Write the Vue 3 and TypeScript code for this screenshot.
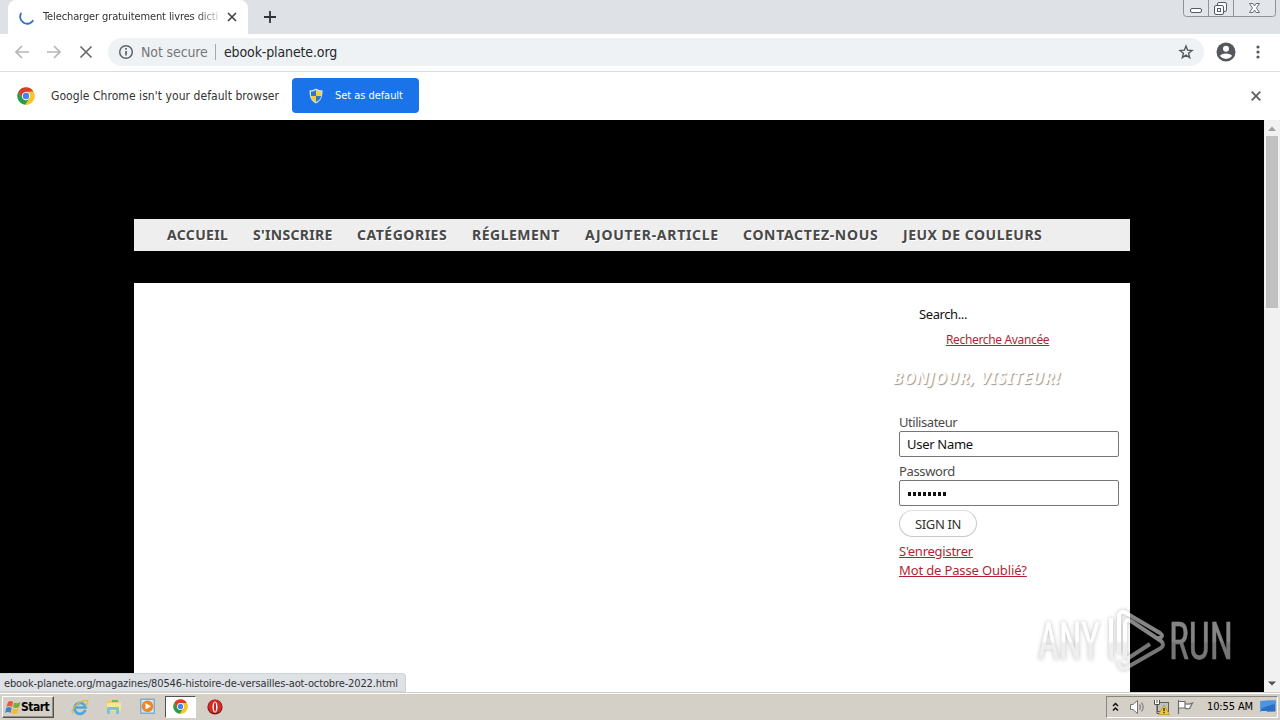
<script setup lang="ts">
import { ref } from 'vue'

interface NavItem {
  label: string
  width: number
  spacing: number
}

const navItems: NavItem[] = [
  { label: 'Accueil', width: 86, spacing: 0.35 },
  { label: "S'inscrire", width: 104, spacing: 0.3 },
  { label: 'Catégories', width: 115, spacing: 0.52 },
  { label: 'Réglement', width: 113, spacing: 0.5 },
  { label: 'Ajouter-article', width: 158, spacing: 0.7 },
  { label: 'Contactez-nous', width: 160, spacing: 0.67 },
  { label: 'Jeux de couleurs', width: 164, spacing: 0.5 },
]

const userName = ref('User Name')
const bullets = 8
</script>

<template>
  <div class="screen">
    <svg class="defs" width="0" height="0" aria-hidden="true">
      <symbol id="chrome" viewBox="0 0 48 48">
        <circle cx="24" cy="24" r="23" fill="#f9c52a" />
        <path d="M4 12.5A23 23 0 0 1 44 12.5H24L14 30Z" fill="#dc3c2e" />
        <path d="M4 12.5A23 23 0 0 0 22 47L34 29.5L14 30Z" fill="#279b50" />
        <path d="M44 12.5A23 23 0 0 1 22 47L34 30L33 12.5Z" fill="#f9c52a" />
        <circle cx="24" cy="24" r="11" fill="#fff" />
        <circle cx="24" cy="24" r="8.5" fill="#4285e8" />
      </symbol>
    </svg>

    <header class="tabstrip">
      <div class="tab">
        <svg class="spinner" width="16" height="16" viewBox="0 0 16 16"><path d="M2.2 4A7 7 0 0 0 14.300 11.300" fill="none" stroke="#2e6fc9" stroke-width="1.8" /></svg>
        <span class="tab-title">Telecharger gratuitement livres dicti</span>
        <svg class="tab-x" width="10" height="10" viewBox="0 0 10 10"><path d="M1 1L9 9M9 1L1 9" stroke="#3c4043" stroke-width="1.6" /></svg>
      </div>
      <svg class="plus" width="12" height="12" viewBox="0 0 12 12"><path d="M6 0V12M0 6H12" stroke="#303338" stroke-width="1.8" /></svg>
      <svg class="window-buttons" width="94" height="18" viewBox="0 0 94 18">
        <path d="M.5 0V13.5Q.5 16.5 3.5 16.5H89.5Q92.5 16.5 92.5 13.5V0M25.5 0V16M50.5 0V16" fill="#e2e5e9" stroke="#8d929b" />
        <rect x="7.500" y="8.500" width="11" height="4" rx="1.500" fill="#fff" stroke="#555b66" />
        <rect x="34.500" y="2.500" width="9" height="9" rx="1.500" fill="#fff" stroke="#555b66" />
        <rect x="31.500" y="5.500" width="9" height="9" rx="1.500" fill="#fff" stroke="#555b66" />
        <rect x="34.500" y="8.500" width="3" height="3" fill="#fff" stroke="#555b66" />
        <path d="M66.500 3.500H70L71.500 6L73 3.500H76.500L73.500 8L76.500 12.500H73L71.500 10L70 12.500H66.500L69.500 8Z" fill="#fff" stroke="#6b7079" />
      </svg>
    </header>

    <div class="toolbar">
      <svg class="nav-icons" width="84" height="16" viewBox="0 0 84 16" fill="none">
        <path d="M15 8H2M8 2L2 8L8 14M33 8H46M40 2L46 8L40 14" stroke="#b4b6b9" stroke-width="1.700" />
        <path d="M66.500 2.500L77.500 13.500M77.500 2.500L66.500 13.500" stroke="#66696d" stroke-width="1.700" />
      </svg>
      <div class="omnibox">
        <svg width="16" height="16" viewBox="0 0 16 16"><circle cx="8" cy="8" r="6.300" fill="none" stroke="#5f6368" stroke-width="1.500" /><path d="M8 7V11.500M8 4V5.700" stroke="#5f6368" stroke-width="1.700" /></svg>
        <span class="not-secure">Not secure</span>
        <i class="divider"></i>
        <span class="url">ebook-planete.org</span>
        <svg class="star" width="16" height="16" viewBox="0 0 16 16"><path d="M8 2L9.600 6.200L14 6.500L10.600 9.300L11.700 13.600L8 11.200L4.300 13.600L5.400 9.300L2 6.500L6.400 6.200Z" fill="none" stroke="#54585d" stroke-width="1.400" /></svg>
      </div>
      <svg class="avatar" width="20" height="20" viewBox="0 0 20 20"><circle cx="10" cy="10" r="9.500" fill="#54585d" /><circle cx="10" cy="6.700" r="3" fill="#fff" /><path d="M3.900 14C5 10.500 15 10.500 16.100 14Q13.700 17 10 17T3.900 14Z" fill="#fff" /></svg>
      <svg class="kebab" width="4" height="14" viewBox="0 0 4 14" fill="#54585d"><circle cx="2" cy="2" r="1.600" /><circle cx="2" cy="7" r="1.600" /><circle cx="2" cy="12" r="1.600" /></svg>
    </div>

    <div class="infobar">
      <svg class="chrome-mark" width="18" height="18"><use href="#chrome" /></svg>
      <span class="default-text">Google Chrome isn't your default browser</span>
      <button class="set-default">
        <svg width="14" height="16" viewBox="0 0 14 16">
          <path d="M7 .5C9 2 11 2.300 13.500 2.200C13.600 9 12 13 7 15.500C2 13 .4 9 .5 2.200C3 2.300 5 2 7 .5Z" fill="#d5dfe6" />
          <path d="M7 2C5 3.300 4 3.500 2 3.500V8H7Z" fill="#3178c8" /><path d="M7 2C9 3.300 10 3.500 12 3.500V8H7Z" fill="#f5cf35" />
          <path d="M2 8H7V14C4 12.500 2.400 11 2 8Z" fill="#f5cf35" /><path d="M7 8H12C11.600 11 10 12.500 7 14Z" fill="#3178c8" />
        </svg>
        <span>Set as default</span>
      </button>
      <svg class="info-x" width="10" height="10" viewBox="0 0 10 10"><path d="M.7 .7L9.300 9.300M9.300 .7L.7 9.300" stroke="#5f6368" stroke-width="1.900" /></svg>
    </div>

    <div class="viewport">
      <main class="page">
        <nav class="menu">
          <a v-for="item in navItems" :key="item.label" :style="{ width: item.width + 'px', letterSpacing: item.spacing + 'px' }">{{ item.label }}</a>
        </nav>
        <section class="content">
          <aside class="sidebar">
            <div class="search">Search...</div>
            <a class="advanced">Recherche Avancée</a>
            <h2>Bonjour, Visiteur!</h2>
            <form class="login">
              <label>Utilisateur</label>
              <div class="field"><span class="username">{{ userName }}</span></div>
              <label class="second">Password</label>
              <div class="field"><span class="bullets"><i v-for="n in bullets" :key="n"></i></span></div>
              <button type="button" class="sign-in"><span>SIGN IN</span></button>
              <a class="register">S'enregistrer</a>
              <a class="forgot">Mot de Passe Oublié?</a>
            </form>
          </aside>
        </section>
      </main>
      <div class="scrollbar">
        <svg width="16" height="16" viewBox="0 0 16 16"><path d="M4 11L8 6.500L12 11Z" fill="#a0a0a0" /></svg>
        <div class="thumb"></div>
        <svg class="down" width="16" height="16" viewBox="0 0 16 16"><path d="M4 5.500H12L8 9.500Z" fill="#4f4f4f" /></svg>
      </div>
      <div class="status">ebook-planete.org/magazines/80546-histoire-de-versailles-aot-octobre-2022.html</div>
      <svg class="watermark" width="230" height="86" viewBox="0 0 230 86">
        <defs>
          <linearGradient id="fade" gradientUnits="userSpaceOnUse" x1="0" y1="8" x2="0" y2="70"><stop offset="0" stop-color="#fff" /><stop offset=".5" stop-color="#fff" /><stop offset=".54" stop-color="#e2e2e2" /><stop offset="1" stop-color="#e2e2e2" /></linearGradient>
        </defs>
        <g class="mark-shape">
          <text x="9" y="57" textLength="62" lengthAdjust="spacingAndGlyphs">ANY</text>
          <path d="M82 16V53Q82 56 85 57M90 51V13Q92 8 97 11L131 31Q135 34 131 36L128 36M96 56V22Q97 16 102 19L132 39Q136 43 132 46L97 66Q92 68 90 62V59M98 57L121 42" fill="none" stroke="url(#fade)" stroke-width="4" stroke-linejoin="round" />
          <text x="140" y="57" textLength="64" lengthAdjust="spacingAndGlyphs">RUN</text>
        </g>
      </svg>
    </div>

    <footer class="taskbar">
      <button class="start">
        <svg width="16" height="16" viewBox="0 0 16 16">
          <path d="M3 3Q6 1 8 3L7 8Q4 6 1.500 8Z" fill="#e85c2b" /><path d="M9 3.500Q12 5 15.500 3L14 8Q11 10 8 8Z" fill="#79ae3b" />
          <path d="M1.200 9Q4 7 6.700 9L5.500 14Q3 12 0 14Z" fill="#3d84cc" /><path d="M7.700 9.500Q11 11 14 9.500L12.500 14Q9 16 6.500 14Z" fill="#f5bd2b" />
        </svg>
        <span>Start</span>
      </button>
      <svg class="quick ie" width="18" height="18" viewBox="0 0 18 18">
        <path d="M14.300 12A5.500 5.500 0 1 1 14.500 9.500H5" fill="none" stroke="#48a9df" stroke-width="2.700" />
        <path d="M2 15.500C-2 12 10 1 16 2.500Q18 4 14.500 8" fill="none" stroke="#e6b83c" stroke-width="1.300" />
      </svg>
      <svg class="quick explorer" width="17" height="17" viewBox="0 0 17 17">
        <path d="M1 3H5L6 1.500H12V4H15V14H1Z" fill="#edcf69" /><path d="M2 5H16V13H2Z" fill="#f6e59b" />
        <path d="M2 16V10Q2 9 3 9H13Q14 9 14 10V16H11V12H5V16Z" fill="#81bde0" /><path d="M7 3H13" stroke="#56a96d" stroke-width="1.500" />
      </svg>
      <svg class="quick player" width="17" height="17" viewBox="0 0 17 17">
        <rect x="1" y=".5" width="15" height="15.500" fill="#7caed8" /><rect x="2.500" y="2" width="12" height="12.500" fill="#d8e8f3" />
        <circle cx="8.500" cy="8.300" r="5.800" fill="#ef8521" /><path d="M6.500 5L12 8.300L6.500 11.600Z" fill="#fff" />
      </svg>
      <div class="active-task"><svg width="15" height="15"><use href="#chrome" /></svg></div>
      <svg class="quick opera" width="16" height="16" viewBox="0 0 16 16">
        <circle cx="8" cy="8" r="7.600" fill="#7e1411" /><circle cx="8" cy="7.500" r="6.800" fill="#d22c26" /><ellipse cx="8" cy="8" rx="2.500" ry="5.500" fill="#fff" /><ellipse cx="8" cy="8" rx="1.100" ry="4.700" fill="#c42723" />
      </svg>
      <div class="tray">
        <svg class="chevrons" width="7" height="10" viewBox="0 0 7 10"><path d="M1 4L3.500 1.500L6 4M1 8.500L3.500 6L6 8.500" fill="none" stroke="#111" stroke-width="1.500" /></svg>
        <svg class="speaker" width="18" height="16" viewBox="0 0 18 16"><path d="M1.500 5.500H4L8.500 1.500V14.500L4 10.500H1.500Z" fill="#fff" stroke="#77746f" /><path d="M10.500 5.500Q12.500 8 10.500 10.500M12.500 3.500Q16 8 12.500 12.500" fill="none" stroke="#8b8883" stroke-width="1.300" /></svg>
        <svg class="network" width="17" height="16" viewBox="0 0 17 16"><rect x="4.500" y="3.500" width="11" height="9" fill="#bfc2c3" stroke="#626262" /><path d="M1 1H7V6H1Z" fill="#fff" /><path d="M1.500 1V5.500H6.500V1M4 1V4M4 6V14.500H8" fill="none" stroke="#4f4f4f" /><path d="M11 6L16.500 15.500H5.500Z" fill="#f4cc28" stroke="#a58819" stroke-width=".6" /><path d="M11 9V12.200M11 13V14.200" stroke="#222" stroke-width="1.300" /></svg>
        <svg class="flag" width="17" height="16" viewBox="0 0 17 16"><path d="M1.500 1V15M2 2.500H8V9H2M8 4.500Q11 6 15.500 4L12.500 9.500Q10 10.500 8 9Z" fill="#fff" stroke="#716f6b" stroke-width="1.200" /></svg>
        <span class="clock">10:55 AM</span>
        <svg class="desktop" width="16" height="14" viewBox="0 0 16 14"><path d="M.5 1L15.500 .5V11.500L.5 12Z" fill="#2b6fc5" /><path d="M.5 1L15.500 .5V4Q8 5 .5 9Z" fill="#4b94de" /><path d="M1 11H7V13H1Z" fill="#b6d3e7" /></svg>
      </div>
    </footer>
  </div>
</template>

<style>
body { margin: 0; overflow: hidden; }
</style>

<style scoped>
* { box-sizing: border-box; }
.screen { width: 1280px; height: 720px; overflow: hidden; display: flex; flex-direction: column; background: #fff; color: #333; font-family: "DejaVu Sans Condensed", "DejaVu Sans", sans-serif; font-stretch: condensed; }
.screen svg { display: block; flex: none; }
.screen > .defs { position: absolute; }
.screen span, .screen a, .status { white-space: nowrap; }
.tabstrip { height: 34px; flex: none; background: #dee1e6; display: flex; align-items: flex-start; padding-left: 8px; }
.tab { width: 240px; height: 34px; border-radius: 8px 8px 0 0; background: #fff; display: flex; align-items: center; padding-left: 11px; }
.tab-title { width: 176px; margin-left: 8px; font-size: 11px; line-height: 18px; letter-spacing: -.11px; -webkit-mask-image: linear-gradient(90deg, #000 153px, transparent 182px); }
.tab-x { margin-left: 8px; }
.tabstrip .plus { margin: 11px 0 0 16px; }
.tabstrip .window-buttons { margin-left: auto; margin-right: 3px; }
.toolbar { height: 38px; flex: none; border-bottom: 1px solid #dcdddf; display: flex; align-items: center; padding: 0 0 2px 14px; }
.omnibox { width: 1096px; height: 28px; margin-left: 10px; border-radius: 14px; background: #eff2f4; display: flex; align-items: center; padding: 0 10px; font-size: 14px; }
.not-secure { width: 68px; margin-left: 7px; color: #74777b; letter-spacing: -.12px; }
.divider { width: 1px; height: 16px; margin: 0 8px 0 6px; background: #a6a9ac; }
.url { color: #26292d; letter-spacing: -.13px; }
.star { margin-left: auto; }
.avatar { margin-left: 12px; }
.kebab { margin-left: 20px; }
.infobar { height: 48px; flex: none; display: flex; align-items: center; padding: 0 0 1px 17px; }
.default-text { width: 228px; margin-left: 16px; font-size: 12px; letter-spacing: .06px; }
.set-default { width: 127px; height: 35px; margin-left: 13px; padding: 0 0 0 17px; border: 0; border-radius: 4px; background: #1a73e8; color: #fff; display: flex; align-items: center; gap: 12px; font: 11px "DejaVu Sans Condensed", "DejaVu Sans", sans-serif; letter-spacing: -.05px; }
.info-x { margin: 0 19px 0 auto; }
.viewport { height: 572px; flex: none; position: relative; background: #000; display: flex; }
.page { width: 1264px; padding: 99px 134px 0; font-family: "Noto Sans", sans-serif; font-stretch: normal; }
.menu { height: 32px; width: 996px; background: #eee; display: flex; padding-left: 33px; color: #484848; font-size: 14px; line-height: 31px; font-weight: 700; text-transform: uppercase; text-shadow: 1px 1px #fff; }
.content { width: 996px; height: 409px; margin-top: 32px; background: #fff; display: flex; justify-content: flex-end; }
.sidebar { width: 237px; padding-top: 22px; display: flex; flex-direction: column; align-items: flex-start; color: #4b4b4b; font-size: 13px; }
.search { margin-left: 26px; color: #111; line-height: 19px; letter-spacing: -.4px; }
.page a.advanced { margin: 7px 0 0 53px; font-size: 12px; line-height: 17px; letter-spacing: -.35px; }
.sidebar a { color: #b41f36; text-decoration: underline; }
.sidebar h2 { margin: 17px 0 0; color: #fff; font-size: 16px; line-height: 26px; font-style: italic; font-weight: 700; letter-spacing: .78px; text-transform: uppercase; text-shadow: 1px 1px 1px #999; white-space: nowrap; }
.login { width: 220px; margin: 22px 0 0 6px; display: flex; flex-direction: column; align-items: flex-start; }
.login label { height: 18px; line-height: 18px; letter-spacing: -.45px; }
.login .second { margin-top: 5px; letter-spacing: -.35px; }
.field { width: 220px; height: 26px; border: 1px solid #767676; border-radius: 2px; padding: 0 7px; color: #111; display: flex; align-items: center; }
.username { letter-spacing: -.3px; }
.bullets { display: flex; gap: 2px; padding: 2px 0 0 1px; }
.bullets i { width: 3px; height: 4px; background: #111; }
.sign-in { width: 78px; height: 27px; margin: 4px 0 5px; border: 1px solid #c8c8c8; border-top-color: #ddd; border-radius: 14px; background: #fff; padding: 0; font: 13px "Noto Sans", sans-serif; letter-spacing: -.4px; color: #333; }
.login a { height: 19px; line-height: 19px; }
.register { letter-spacing: -.25px; }
.forgot { letter-spacing: -.14px; }
.scrollbar { width: 16px; height: 572px; background: #f1f1f1; display: flex; flex-direction: column; }
.thumb { width: 12px; height: 172px; margin-left: 2px; background: #c1c1c1; }
.scrollbar .down { margin-top: auto; }
.status { position: absolute; left: 0; bottom: 0; width: 406px; height: 19px; padding-left: 4px; border-radius: 0 4px 0 0; border: 1px solid #d0d2d5; border-left: 0; background: #dee1e6; font-size: 11px; line-height: 19px; letter-spacing: -.13px; }
.watermark { position: absolute; left: 1029px; top: 482px; overflow: visible; }
.watermark text { fill: url(#fade); stroke: url(#fade); stroke-width: .5px; font-family: Roboto, sans-serif; font-size: 51px; }
.mark-shape { opacity: .52; filter: drop-shadow(0 0 2px rgba(0, 0, 0, .5)); }
.taskbar { height: 28px; flex: none; background: #d4cfc7; border-top: 1px solid #d4d0c8; box-shadow: inset 0 1px #fff; display: flex; align-items: center; padding: 0 0 0 2px; }
.start { width: 52px; height: 22px; padding: 0 0 0 2px; background: #d4cfc7; border: 1px solid; border-color: #fff #55514d #55514d #fff; box-shadow: inset -1px -1px #918e88; display: flex; align-items: center; font: bold 12px "DejaVu Sans Condensed", "DejaVu Sans", sans-serif; color: #000; letter-spacing: -.5px; }
.ie { margin-left: 17px; }
.explorer { margin-left: 16px; }
.player { margin-left: 17px; }
.active-task { width: 31px; height: 22px; margin-left: 9px; border: 1px solid; border-color: #55514d #fff #fff #55514d; background: #fff; display: flex; align-items: center; justify-content: center; }
.opera { margin-left: 11px; }
.tray { width: 172px; height: 22px; margin-left: auto; margin-right: 2px; border: 1px solid; border-color: #88847f #fff #fff #88847f; display: flex; align-items: center; padding-left: 5px; color: #000; font-size: 11px; }
.speaker { margin-left: 10px; }
.network { margin-left: 6px; }
.flag { margin-left: 7px; }
.clock { width: 46px; margin-left: 13px; letter-spacing: -.12px; }
.desktop { margin-left: 7px; }
</style>
